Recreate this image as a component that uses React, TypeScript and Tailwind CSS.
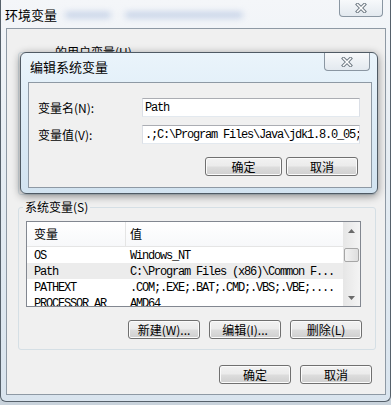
import React from 'react';

const cjk = "font-['Noto_Sans_CJK_SC',sans-serif]";
const mono = "font-['Liberation_Mono','Noto_Sans_CJK_SC',monospace]";

const CloseGlyph: React.FC = () => (
  <svg width="12" height="10" viewBox="0 0 12 10">
    <path d="M2.5 1.5 L9.5 8.5 M9.5 1.5 L2.5 8.5" stroke="#6f7a84" strokeWidth="3.4" strokeLinecap="square" />
    <path d="M2.5 1.5 L9.5 8.5 M9.5 1.5 L2.5 8.5" stroke="#ffffff" strokeWidth="1.5" strokeLinecap="square" />
  </svg>
);

const Btn: React.FC<{ w: string; children: React.ReactNode }> = ({ w, children }) => (
  <button
    className={`${w} h-[19px] rounded-[3px] border border-[#707070] bg-[linear-gradient(#f2f2f2_0%,#ebebeb_48%,#dddddd_52%,#cfcfcf_100%)] shadow-[inset_0_0_0_1px_#fbfbfb] text-[12px] leading-[14px] text-black ${cjk}`}
  >
    {children}
  </button>
);

const Arrow: React.FC<{ up?: boolean }> = ({ up }) => (
  <svg width="7" height="4" viewBox="0 0 7 4">
    <path d={up ? 'M0 4 L3.5 0 L7 4 Z' : 'M0 0 L3.5 4 L7 0 Z'} fill="#6a6a6a" />
  </svg>
);

const rows = [
  { name: 'OS', value: 'Windows_NT', sel: false },
  { name: 'Path', value: 'C:\\Program Files (x86)\\Common F...', sel: true },
  { name: 'PATHEXT', value: '.COM;.EXE;.BAT;.CMD;.VBS;.VBE;....', sel: false },
  { name: 'PROCESSOR_AR', value: 'AMD64', sel: false },
];

const App: React.FC = () => {
  return (
    <div className="relative w-[391px] h-[405px] overflow-hidden bg-[#c9d3dc]">
      {/* outer window */}
      <div className="w-[391px] h-[402px] rounded-b-[6px] border-x border-b border-[#56616b] bg-[linear-gradient(#f4f6f9,#e6edf3_40%,#d9e4ee)]">
        {/* title bar */}
        <div className="flex h-[28px] items-start justify-between">
          <div className="flex items-center pl-[4px] pt-[7px]">
            <span className={`text-[13px] leading-[15px] text-black ${cjk}`}>环境变量</span>
            <div className="ml-[8px] h-[6px] w-[46px] rounded-full bg-[#7e9ccc]/40 blur-[3px]" />
            <div className="ml-[14px] h-[6px] w-[118px] rounded-full bg-[#7e9ccc]/40 blur-[3px]" />
          </div>
          <button className="mr-[7px] flex h-[17px] w-[44px] items-center justify-center rounded-b-[4px] border-x border-b border-[#8a96a2] bg-[linear-gradient(#f7f9fb,#e3e9ef)]">
            <CloseGlyph />
          </button>
        </div>

        {/* client area */}
        <div className="ml-[5px] h-[367px] w-[380px] border border-[#8e99a4] bg-[#f0f0f0]">
          <fieldset className="ml-[11px] mt-[16px] h-[150px] w-[358px] rounded-[3px] border border-[#d5dfe5]">
            <legend className={`ml-[34px] px-[2px] text-[12px] leading-[14px] text-black ${cjk}`}>的用户变量(U)</legend>
          </fieldset>

          <fieldset className="ml-[11px] mt-[5px] w-[358px] rounded-[3px] border border-[#d5dfe5]">
            <legend className={`ml-[4px] px-[2px] text-[12px] leading-[14px] text-black ${cjk}`}>系统变量(S)</legend>
            <div className="pl-[7px] pt-[7px] pb-[10px] pr-[13px]">
              <div className="flex h-[86px] w-[335px] overflow-hidden border border-[#828790] bg-white">
                <div className="flex-1 overflow-hidden">
                  <div className="flex h-[25px] items-center border-b border-[#e5e5e5] bg-[linear-gradient(#ffffff,#f7f8fa)]">
                    <div className={`flex h-full w-[99px] items-center border-r border-[#e5e5e5] pl-[7px] text-[12px] text-black ${cjk}`}>变量</div>
                    <div className={`pl-[4px] text-[12px] text-black ${cjk}`}>值</div>
                  </div>
                  {rows.map((r) => (
                    <div
                      key={r.name}
                      className={`flex h-[16px] items-start pt-[3px] text-[12px] leading-[13px] tracking-[-1.2px] text-black ${mono} ${r.sel ? 'bg-[#ececec]' : ''}`}
                    >
                      <div className="w-[99px] whitespace-pre pl-[7px]">{r.name}</div>
                      <div className="whitespace-pre pl-[4px]">{r.value}</div>
                    </div>
                  ))}
                </div>
                <div className="flex w-[17px] flex-col bg-[linear-gradient(90deg,#e6e6e6,#f4f4f4)]">
                  <div className="flex h-[17px] items-center justify-center">
                    <Arrow up />
                  </div>
                  <div className="mx-[1px] mt-[9px] h-[14px] rounded-[2px] border border-[#a6a6a6] bg-[linear-gradient(90deg,#f2f2f2,#dedede)]" />
                  <div className="flex-1" />
                  <div className="flex h-[17px] items-center justify-center">
                    <Arrow />
                  </div>
                </div>
              </div>
              <div className="mt-[13px] flex justify-end gap-[9px]">
                <Btn w="w-[72px]">新建(W)...</Btn>
                <Btn w="w-[72px]">编辑(I)...</Btn>
                <Btn w="w-[72px]">删除(L)</Btn>
              </div>
            </div>
          </fieldset>

          <div className="mt-[15px] flex justify-end gap-[9px] pr-[13px]">
            <Btn w="w-[72px]">确定</Btn>
            <Btn w="w-[72px]">取消</Btn>
          </div>
        </div>
      </div>

      {/* edit dialog over the window */}
      <div className="absolute left-[20px] top-[52px] h-[142px] w-[358px] rounded-[6px] border border-[#4f5a64] bg-[linear-gradient(#eaf4fb,#dcebf6_50%,#d2e3f0)] shadow-[0_2px_8px_rgba(0,0,0,0.45)]">
        <div className="flex h-[29px] items-start justify-between">
          <span className={`ml-[9px] mt-[6px] text-[13px] leading-[15px] text-black ${cjk}`}>编辑系统变量</span>
          <button className="mr-[7px] flex h-[18px] w-[46px] items-center justify-center rounded-b-[4px] border-x border-b border-[#8a96a2] bg-[linear-gradient(#f7f9fb,#e3e9ef)]">
            <CloseGlyph />
          </button>
        </div>
        <div className="ml-[7px] h-[106px] w-[344px] border border-[#8e99a4] bg-[#f0f0f0] pl-[9px] pr-[11px] pt-[15px]">
          <div className="flex h-[19px] items-center">
            <div className={`w-[104px] text-[12px] leading-[14px] text-black ${cjk}`}>变量名(N):</div>
            <div className={`flex h-[19px] flex-1 items-center border border-[#dbdfe6] border-t-[#abadb3] border-b-[#e3e9ef] bg-white pl-[2px] text-[12px] tracking-[-1.2px] text-black ${mono}`}>
              Path
            </div>
          </div>
          <div className="mt-[8px] flex h-[19px] items-center">
            <div className={`w-[104px] text-[12px] leading-[14px] text-black ${cjk}`}>变量值(V):</div>
            <div className={`flex h-[19px] flex-1 items-center overflow-hidden whitespace-pre border border-[#dbdfe6] border-t-[#abadb3] border-b-[#e3e9ef] bg-white pl-[2px] text-[12px] tracking-[-1.2px] text-black ${mono}`}>
              .;C:\Program Files\Java\jdk1.8.0_05;
            </div>
          </div>
          <div className="mt-[13px] flex justify-end gap-[4px] pr-[2px]">
            <Btn w="w-[77px]">确定</Btn>
            <Btn w="w-[72px]">取消</Btn>
          </div>
        </div>
      </div>
    </div>
  );
};

export default App;
